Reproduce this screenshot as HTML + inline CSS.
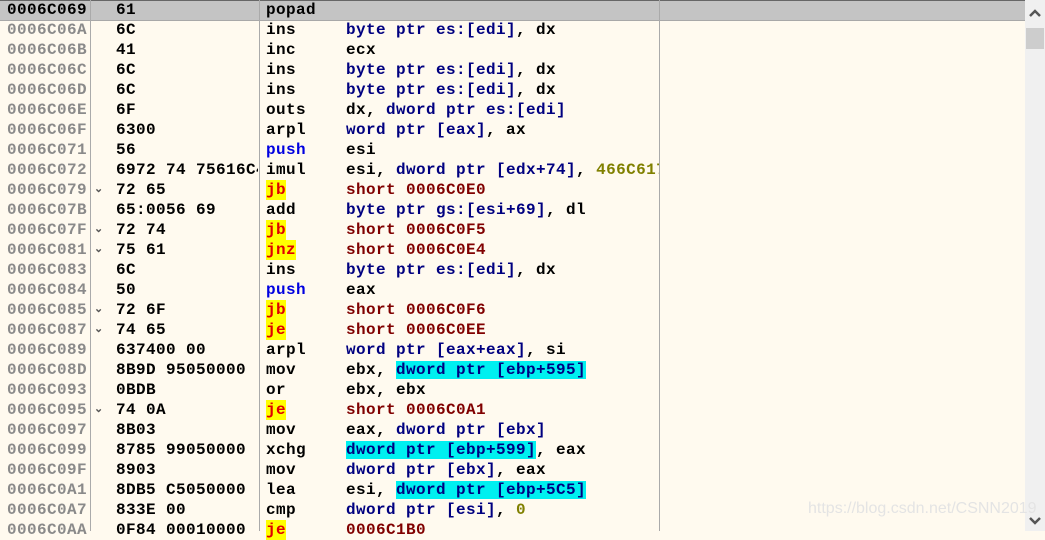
<!DOCTYPE html>
<html><head><meta charset="utf-8"><style>
html,body{height:531px}
body{margin:0;width:1045px;height:531px;overflow:hidden;background:#fffaef;position:relative;font-family:"Liberation Mono",monospace;font-weight:bold;font-size:16px;letter-spacing:0.4px}
.r{position:absolute;left:0;width:1025px;height:20px;line-height:20px;white-space:nowrap}
.r span{position:absolute;top:0}
.a{left:7px;color:#8a8a8a;width:80px;overflow:hidden}
.h{left:116px;color:#000;width:142px;overflow:hidden}
.m{left:266px;color:#000}
.o{left:346px;color:#000;width:313px;overflow:hidden}
.sel{background:#c4c4c4}
.sel .a{color:#000}
.j{background:#ffff00;color:#e00000!important}
.p{color:#0000e0!important}
.n{color:#000080}
.t{color:#800000!important}
.c{color:#808000}
.hl{background:#00f0f0;color:#000080}
.ar{position:absolute;left:94px;color:#555;font-size:11px;top:-3px}
.vl{position:absolute;top:0;height:531px;width:1px;background:#aaa}
#sb{position:absolute;left:1025px;top:0;width:20px;height:531px;background:#f0f0f0}
#wm{position:absolute;left:808px;top:500px;font-family:"Liberation Sans",sans-serif;font-weight:normal;letter-spacing:0;font-size:16px;color:#e4e4e4}
</style></head><body>
<div class="r sel" style="top:0;height:21px;border-top:1px solid #666;border-bottom:1px solid #a8a8a8;box-sizing:border-box;width:1025px;line-height:18px"><span class="a">0006C069</span><span class="h">61</span><span class="m">popad</span></div>
<div class="r" style="top:20px"><span class="a">0006C06A</span><span class="h">6C</span><span class="m">ins</span><span class="o"><span style="position:static" class="n">byte ptr es:[edi]</span>, dx</span></div>
<div class="r" style="top:40px"><span class="a">0006C06B</span><span class="h">41</span><span class="m">inc</span><span class="o">ecx</span></div>
<div class="r" style="top:60px"><span class="a">0006C06C</span><span class="h">6C</span><span class="m">ins</span><span class="o"><span style="position:static" class="n">byte ptr es:[edi]</span>, dx</span></div>
<div class="r" style="top:80px"><span class="a">0006C06D</span><span class="h">6C</span><span class="m">ins</span><span class="o"><span style="position:static" class="n">byte ptr es:[edi]</span>, dx</span></div>
<div class="r" style="top:100px"><span class="a">0006C06E</span><span class="h">6F</span><span class="m">outs</span><span class="o">dx, <span style="position:static" class="n">dword ptr es:[edi]</span></span></div>
<div class="r" style="top:120px"><span class="a">0006C06F</span><span class="h">6300</span><span class="m">arpl</span><span class="o"><span style="position:static" class="n">word ptr [eax]</span>, ax</span></div>
<div class="r" style="top:140px"><span class="a">0006C071</span><span class="h">56</span><span class="m p">push</span><span class="o">esi</span></div>
<div class="r" style="top:160px"><span class="a">0006C072</span><span class="h">6972 74 75616C4</span><span class="m">imul</span><span class="o">esi, <span style="position:static" class="n">dword ptr [edx+74]</span>, <span style="position:static" class="c">466C617</span></span></div>
<div class="r" style="top:180px"><span class="a">0006C079</span><span class="ar">⌄</span><span class="h">72 65</span><span class="m j">jb</span><span class="o t">short 0006C0E0</span></div>
<div class="r" style="top:200px"><span class="a">0006C07B</span><span class="h">65:0056 69</span><span class="m">add</span><span class="o"><span style="position:static" class="n">byte ptr gs:[esi+69]</span>, dl</span></div>
<div class="r" style="top:220px"><span class="a">0006C07F</span><span class="ar">⌄</span><span class="h">72 74</span><span class="m j">jb</span><span class="o t">short 0006C0F5</span></div>
<div class="r" style="top:240px"><span class="a">0006C081</span><span class="ar">⌄</span><span class="h">75 61</span><span class="m j">jnz</span><span class="o t">short 0006C0E4</span></div>
<div class="r" style="top:260px"><span class="a">0006C083</span><span class="h">6C</span><span class="m">ins</span><span class="o"><span style="position:static" class="n">byte ptr es:[edi]</span>, dx</span></div>
<div class="r" style="top:280px"><span class="a">0006C084</span><span class="h">50</span><span class="m p">push</span><span class="o">eax</span></div>
<div class="r" style="top:300px"><span class="a">0006C085</span><span class="ar">⌄</span><span class="h">72 6F</span><span class="m j">jb</span><span class="o t">short 0006C0F6</span></div>
<div class="r" style="top:320px"><span class="a">0006C087</span><span class="ar">⌄</span><span class="h">74 65</span><span class="m j">je</span><span class="o t">short 0006C0EE</span></div>
<div class="r" style="top:340px"><span class="a">0006C089</span><span class="h">637400 00</span><span class="m">arpl</span><span class="o"><span style="position:static" class="n">word ptr [eax+eax]</span>, si</span></div>
<div class="r" style="top:360px"><span class="a">0006C08D</span><span class="h">8B9D 95050000</span><span class="m">mov</span><span class="o">ebx, <span style="position:static" class="hl">dword ptr [ebp+595]</span></span></div>
<div class="r" style="top:380px"><span class="a">0006C093</span><span class="h">0BDB</span><span class="m">or</span><span class="o">ebx, ebx</span></div>
<div class="r" style="top:400px"><span class="a">0006C095</span><span class="ar">⌄</span><span class="h">74 0A</span><span class="m j">je</span><span class="o t">short 0006C0A1</span></div>
<div class="r" style="top:420px"><span class="a">0006C097</span><span class="h">8B03</span><span class="m">mov</span><span class="o">eax, <span style="position:static" class="n">dword ptr [ebx]</span></span></div>
<div class="r" style="top:440px"><span class="a">0006C099</span><span class="h">8785 99050000</span><span class="m">xchg</span><span class="o"><span style="position:static" class="hl">dword ptr [ebp+599]</span>, eax</span></div>
<div class="r" style="top:460px"><span class="a">0006C09F</span><span class="h">8903</span><span class="m">mov</span><span class="o"><span style="position:static" class="n">dword ptr [ebx]</span>, eax</span></div>
<div class="r" style="top:480px"><span class="a">0006C0A1</span><span class="h">8DB5 C5050000</span><span class="m">lea</span><span class="o">esi, <span style="position:static" class="hl">dword ptr [ebp+5C5]</span></span></div>
<div class="r" style="top:500px"><span class="a">0006C0A7</span><span class="h">833E 00</span><span class="m">cmp</span><span class="o"><span style="position:static" class="n">dword ptr [esi]</span>, <span style="position:static" class="c">0</span></span></div>
<div class="r" style="top:520px"><span class="a">0006C0AA</span><span class="h">0F84 00010000</span><span class="m j">je</span><span class="o t">0006C1B0</span></div>
<div class="vl" style="left:90px"></div>
<div class="vl" style="left:259px"></div>
<div class="vl" style="left:659px"></div>
<div id="sb">
<svg width="20" height="531" style="position:absolute;left:0;top:0">
<path d="M5 16 L10 11 L15 16" stroke="#555" stroke-width="2.5" fill="none"/>
<rect x="1" y="28" width="18" height="21" fill="#cdcdcd"/>
<path d="M5 518 L10 523 L15 518" stroke="#555" stroke-width="2.5" fill="none"/>
</svg></div>
<div id="wm">https://blog.csdn.net/CSNN2019</div>
</body></html>
